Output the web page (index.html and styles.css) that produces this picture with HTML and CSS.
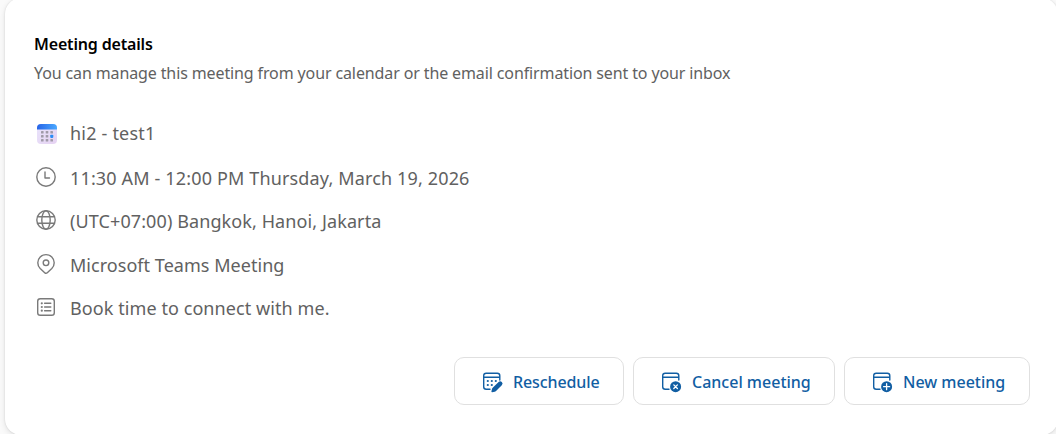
FILE: index.html
```html
<!DOCTYPE html>
<html lang="en">
<head>
	<meta charset="utf-8">
	<meta name="viewport" content="width=device-width, initial-scale=1">
	<title>Meeting details</title>
	<link rel="stylesheet" href="styles.css">
</head>
<body>
	<main class="card">
		<h1 class="title">Meeting details</h1>
		<p class="subtitle">You can manage this meeting from your calendar or the email confirmation sent to your inbox</p>

		<ul class="details">
			<li class="detail detail-name">
				<svg class="detail-icon" viewBox="0 0 24 24">
					<defs>
						<linearGradient id="cal-body" x1="0" y1="0" x2="1" y2="1">
							<stop offset="0" stop-color="#e8e4fb"/>
							<stop offset="1" stop-color="#e6d2f2"/>
						</linearGradient>
						<linearGradient id="cal-top" x1="0" y1="0" x2="1" y2="0">
							<stop offset="0" stop-color="#2764e7"/>
							<stop offset="1" stop-color="#4aa9ff"/>
						</linearGradient>
					</defs>
					<rect x="3" y="3" width="20" height="20" rx="4" fill="url(#cal-body)"/>
					<path d="M3 8.500V7a4 4 0 0 1 4-4h12a4 4 0 0 1 4 4v1.500z" fill="url(#cal-top)"/>
					<g fill="#a09aa8">
						<rect x="7" y="10" width="2.600" height="2.600" rx=".6"/>
						<rect x="11.700" y="10" width="2.600" height="2.600" rx=".6"/>
						<rect x="16.400" y="10" width="2.600" height="2.600" rx=".6"/>
						<rect x="7" y="14" width="2.600" height="2.600" rx=".6"/>
						<rect x="11.700" y="14" width="2.600" height="2.600" rx=".6"/>
						<rect x="7" y="18" width="2.600" height="2.600" rx=".6"/>
						<rect x="11.700" y="18" width="2.600" height="2.600" rx=".6"/>
						<rect x="16.400" y="18" width="2.600" height="2.600" rx=".6"/>
					</g>
					<rect x="16.200" y="13.800" width="3.100" height="3.100" rx=".8" fill="#2b8cf5"/>
				</svg>
				<span>hi2 - test1</span>
			</li>
			<li class="detail detail-time">
				<svg class="detail-icon line" viewBox="0 0 24 24">
					<circle cx="12" cy="11" r="9.200"/>
					<path d="M11 6v6h4.500"/>
				</svg>
				<span>11:30 AM - 12:00 PM Thursday, March 19, 2026</span>
			</li>
			<li class="detail detail-zone">
				<svg class="detail-icon line" viewBox="0 0 24 24">
					<circle cx="12" cy="11" r="9.200"/>
					<ellipse cx="12" cy="11" rx="4.200" ry="9.200"/>
					<path d="M3.600 7.800h16.800M3.600 14.200h16.800"/>
				</svg>
				<span>(UTC+07:00) Bangkok, Hanoi, Jakarta</span>
			</li>
			<li class="detail detail-place">
				<svg class="detail-icon line" viewBox="0 0 24 24">
					<path d="M17.800 15.600L13.300 19.700a1.900 1.900 0 0 1-2.600 0L6.200 15.600a8.200 8.200 0 1 1 11.600 0z"/>
					<circle cx="12" cy="9.800" r="2.800"/>
				</svg>
				<span>Microsoft Teams Meeting</span>
			</li>
			<li class="detail detail-note">
				<svg class="detail-icon line" viewBox="0 0 24 24">
					<rect x="3.700" y="2.700" width="16.600" height="16.600" rx="2.600"/>
					<path d="M10.600 7.300h6.200M10.600 11h6.200M10.600 14.700h6.200"/>
					<g class="dots">
						<circle cx="7.800" cy="7.300" r="1.100"/>
						<circle cx="7.800" cy="11" r="1.100"/>
						<circle cx="7.800" cy="14.700" r="1.100"/>
					</g>
				</svg>
				<span>Book time to connect with me.</span>
			</li>
		</ul>

		<div class="actions">
			<button class="btn btn-reschedule" type="button">
				<svg class="btn-icon" viewBox="0 0 24 24">
					<path d="M10 19.300H6.200a2.500 2.500 0 0 1-2.500-2.500V5.700a2.500 2.500 0 0 1 2.500-2.500h11.100a2.500 2.500 0 0 1 2.500 2.500V10M3.700 7.200h16.100"/>
					<g class="solid">
						<circle cx="7.800" cy="11" r="1.100"/>
						<circle cx="11.800" cy="11" r="1.100"/>
						<circle cx="15.800" cy="11" r="1.100"/>
						<circle cx="7.800" cy="15" r="1.100"/>
						<circle cx="11.800" cy="15" r="1.100"/>
						<path d="M18.600 12a2.200 2.200 0 0 1 3.200 3.200l-5.800 5.800c-.4.4-.8.600-1.300.7l-2.500.6c-.5.1-.9-.3-.8-.8l.6-2.500c.1-.5.4-.9.700-1.200z"/>
					</g>
				</svg>
				<span>Reschedule</span>
			</button>
			<button class="btn btn-cancel" type="button">
				<svg class="btn-icon" viewBox="0 0 24 24">
					<path d="M10 19.300H6.200a2.500 2.500 0 0 1-2.500-2.500V5.700a2.500 2.500 0 0 1 2.500-2.500h11.100a2.500 2.500 0 0 1 2.500 2.500V10M3.700 7.200h16.100"/>
					<circle class="badge" cx="16.600" cy="16.700" r="5.500"/>
					<path class="mark" d="M14.800 14.900l3.600 3.600M18.400 14.900l-3.600 3.600"/>
				</svg>
				<span>Cancel meeting</span>
			</button>
			<button class="btn btn-new" type="button">
				<svg class="btn-icon" viewBox="0 0 24 24">
					<path d="M10 19.300H6.200a2.500 2.500 0 0 1-2.500-2.500V5.700a2.500 2.500 0 0 1 2.500-2.500h11.100a2.500 2.500 0 0 1 2.500 2.500V10M3.700 7.200h16.100"/>
					<circle class="badge" cx="16.600" cy="16.700" r="5.500"/>
					<path class="mark" d="M16.600 13.700v6M13.600 16.700h6"/>
				</svg>
				<span>New meeting</span>
			</button>
		</div>
	</main>
</body>
</html>
```

FILE: styles.css
```css
* {
	box-sizing: border-box;
}
body {
	margin: 0;
	background: #fafafa;
	font-family: "Segoe UI", "Noto Sans", "Open Sans", sans-serif;
	overflow: hidden;
}
.card {
	width: 1053px;
	height: 437px;
	margin: -2px 0 0 5px;
	padding: 34px 28px 0 29px;
	background: #fff;
	border-radius: 16px;
	box-shadow: 0 0 2px rgba(0, 0, 0, .12), 0 2px 6px rgba(0, 0, 0, .1);
}
.title {
	margin: 0;
	font-size: 16px;
	font-weight: 600;
	line-height: 24px;
	letter-spacing: -.17px;
	color: #000;
}
.subtitle {
	margin: 5px 0 0;
	font-size: 16px;
	line-height: 24px;
	letter-spacing: -.12px;
	color: #616161;
	white-space: nowrap;
}
.details {
	display: flex;
	flex-direction: column;
	margin: 26px 0 0;
	padding: 0;
	list-style: none;
}
.detail {
	display: flex;
	align-items: center;
	gap: 12px;
	height: 43.5px;
	font-size: 18px;
	color: #616161;
	white-space: nowrap;
}
.detail-name {
	height: 44.5px;
	margin-bottom: 1px;
	letter-spacing: .2px;
}
.detail-time {
	height: 42.5px;
	letter-spacing: .15px;
}
.detail-zone {
	height: 44px;
	letter-spacing: .1px;
}
.detail-place {
	letter-spacing: .04px;
}
.detail-note {
	height: 43px;
	letter-spacing: .08px;
}
.detail-icon {
	width: 24px;
	height: 24px;
	flex: none;
}
.line {
	fill: none;
	stroke: #7a7a7a;
	stroke-width: 1.4;
	stroke-linecap: round;
	stroke-linejoin: round;
}
.dots {
	fill: #7a7a7a;
	stroke: none;
}
.actions {
	display: flex;
	justify-content: flex-end;
	gap: 9px;
	margin-top: 27.5px;
}
.btn {
	display: flex;
	align-items: center;
	gap: 9px;
	height: 48px;
	padding: 2px 0 0 25px;
	background: #fff;
	border: 1px solid #e0e0e0;
	border-radius: 10px;
	font-family: inherit;
	font-size: 16px;
	font-weight: 500;
	color: #115ea3;
	white-space: nowrap;
}
.btn-reschedule {
	width: 170px;
	letter-spacing: -.1px;
}
.btn-cancel {
	width: 202px;
}
.btn-new {
	width: 186px;
}
.btn-icon {
	width: 24px;
	height: 24px;
	flex: none;
	fill: none;
	stroke: #115ea3;
	stroke-width: 1.4;
	stroke-linecap: round;
}
.solid {
	fill: #115ea3;
	stroke: none;
}
.badge {
	fill: #115ea3;
	stroke: none;
}
.mark {
	stroke: #fff;
	stroke-width: 1.3;
}
```
